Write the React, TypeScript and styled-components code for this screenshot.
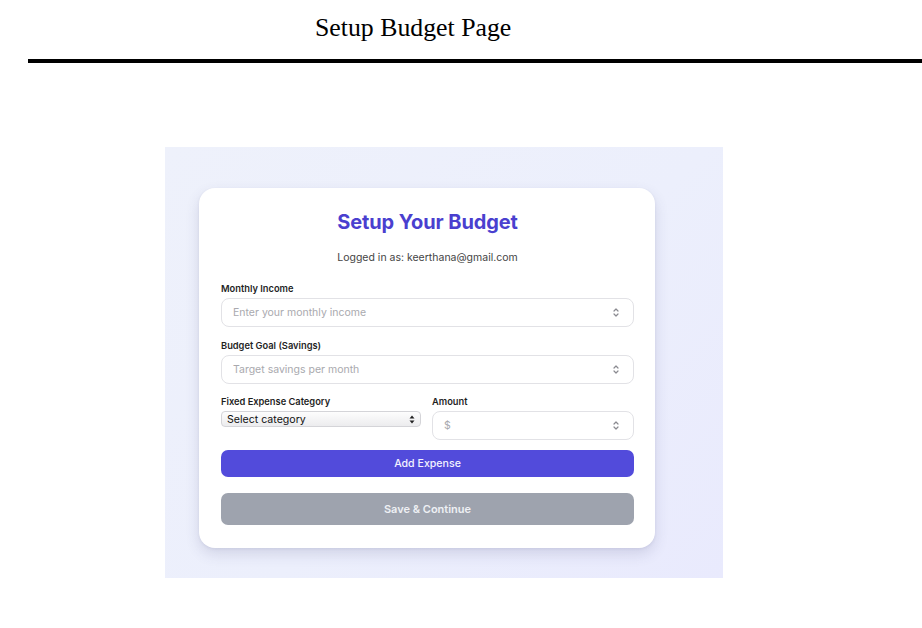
import styled, { createGlobalStyle } from 'styled-components';

const GlobalStyle = createGlobalStyle`
  * { box-sizing: border-box; }
  body {
    margin: 0;
    background: #fff;
    font-family: Inter, "Noto Sans", sans-serif;
  }
`;

const Page = styled.div`
  width: 922px;
  height: 628px;
  overflow: hidden;
  background: #fff;
`;

const DocTitle = styled.h1`
  margin: 0;
  padding: 14px 0 0 315px;
  height: 59px;
  font-family: "Liberation Serif", "Times New Roman", serif;
  font-weight: 400;
  font-size: 25.8px;
  line-height: 28px;
  color: #000;
`;

const Rule = styled.hr`
  margin: 0 0 0 28px;
  border: none;
  height: 4px;
  background: #000;
`;

const Shot = styled.div`
  margin: 84px 0 0 165px;
  width: 558px;
  height: 431px;
  background: linear-gradient(135deg, #eef1fb 0%, #eceffc 55%, #e9eafd 100%);
  padding: 41px 0 0 34px;
`;

const Card = styled.div`
  width: 456px;
  background: #fff;
  border-radius: 16px;
  box-shadow: 0 6px 14px rgba(70, 70, 120, 0.16), 0 1px 3px rgba(70, 70, 120, 0.08);
  padding: 21px 21px 23px 22px;
  display: flex;
  flex-direction: column;
`;

const Heading = styled.h2`
  margin: 0;
  text-align: center;
  font-size: 20px;
  line-height: 26px;
  font-weight: 700;
  color: #4a3fcf;
  letter-spacing: -0.1px;
`;

const LoggedIn = styled.p`
  margin: 16px 0 18px;
  text-align: center;
  font-size: 10.5px;
  line-height: 14px;
  color: #444;
`;

const Label = styled.label`
  display: block;
  font-size: 9.3px;
  line-height: 12px;
  font-weight: 600;
  color: #1f1f1f;
  margin-bottom: 3px;
`;

const Group = styled.div<{ $mb?: number }>`
  margin-bottom: ${({ $mb }) => $mb ?? 13}px;
`;

const Field = styled.div`
  display: flex;
  align-items: center;
  height: 29px;
  border: 1px solid #e2e2e6;
  border-radius: 8px;
  padding: 0 13px 0 11px;
  background: #fff;
`;

const Input = styled.input`
  flex: 1;
  min-width: 0;
  border: none;
  outline: none;
  background: transparent;
  font-family: inherit;
  font-size: 10.5px;
  color: #333;
  padding: 0;
  &::placeholder { color: #a9a9ae; }
`;

const Row = styled.div`
  display: grid;
  grid-template-columns: 200px 1fr;
  gap: 11px;
  margin-bottom: 10px;
  align-items: start;
`;

const FakeSelect = styled.div`
  display: flex;
  align-items: center;
  height: 16px;
  border: 1px solid #d4d4d8;
  border-radius: 4px;
  padding: 0 5px;
  background: linear-gradient(#fdfdfd, #ececee);
  font-size: 10.6px;
  color: #111;
  span { flex: 1; }
`;

const Button = styled.button<{ $variant?: 'primary' | 'muted' }>`
  width: 100%;
  border: none;
  border-radius: 7px;
  font-family: inherit;
  cursor: pointer;
  ${({ $variant }) =>
    $variant === 'muted'
      ? `height: 32px; margin-top: 16px; background: #9ea3ae; color: #eef0f4; font-weight: 600; font-size: 11px;`
      : `height: 27px; background: #524bdb; color: #f3f2ff; font-weight: 500; font-size: 10.6px;`}
`;

function Spinner() {
  return (
    <svg width="8" height="11" viewBox="0 0 8 11" fill="none" stroke="#8a8a90" strokeWidth="1.2" strokeLinecap="round" strokeLinejoin="round">
      <path d="M2 4 L4 2 L6 4" />
      <path d="M2 7 L4 9 L6 7" />
    </svg>
  );
}

function SelectArrows() {
  return (
    <svg width="6" height="9" viewBox="0 0 6 9" fill="#222">
      <path d="M0.5 3.6 L3 0.5 L5.5 3.6 Z" />
      <path d="M0.5 5.4 L3 8.5 L5.5 5.4 Z" />
    </svg>
  );
}

export default function App() {
  return (
    <Page>
      <GlobalStyle />
      <DocTitle>Setup Budget Page</DocTitle>
      <Rule />
      <Shot>
        <Card>
          <Heading>Setup Your Budget</Heading>
          <LoggedIn>Logged in as: keerthana@gmail.com</LoggedIn>

          {/* Monthly income */}
          <Group>
            <Label>Monthly Income</Label>
            <Field>
              <Input placeholder="Enter your monthly income" />
              <Spinner />
            </Field>
          </Group>

          {/* Savings goal */}
          <Group $mb={12}>
            <Label>Budget Goal (Savings)</Label>
            <Field>
              <Input placeholder="Target savings per month" />
              <Spinner />
            </Field>
          </Group>

          {/* Fixed expense row */}
          <Row>
            <div>
              <Label>Fixed Expense Category</Label>
              <FakeSelect>
                <span>Select category</span>
                <SelectArrows />
              </FakeSelect>
            </div>
            <div>
              <Label>Amount</Label>
              <Field>
                <Input placeholder="$" />
                <Spinner />
              </Field>
            </div>
          </Row>

          <Button>Add Expense</Button>
          <Button $variant="muted">Save &amp; Continue</Button>
        </Card>
      </Shot>
    </Page>
  );
}
